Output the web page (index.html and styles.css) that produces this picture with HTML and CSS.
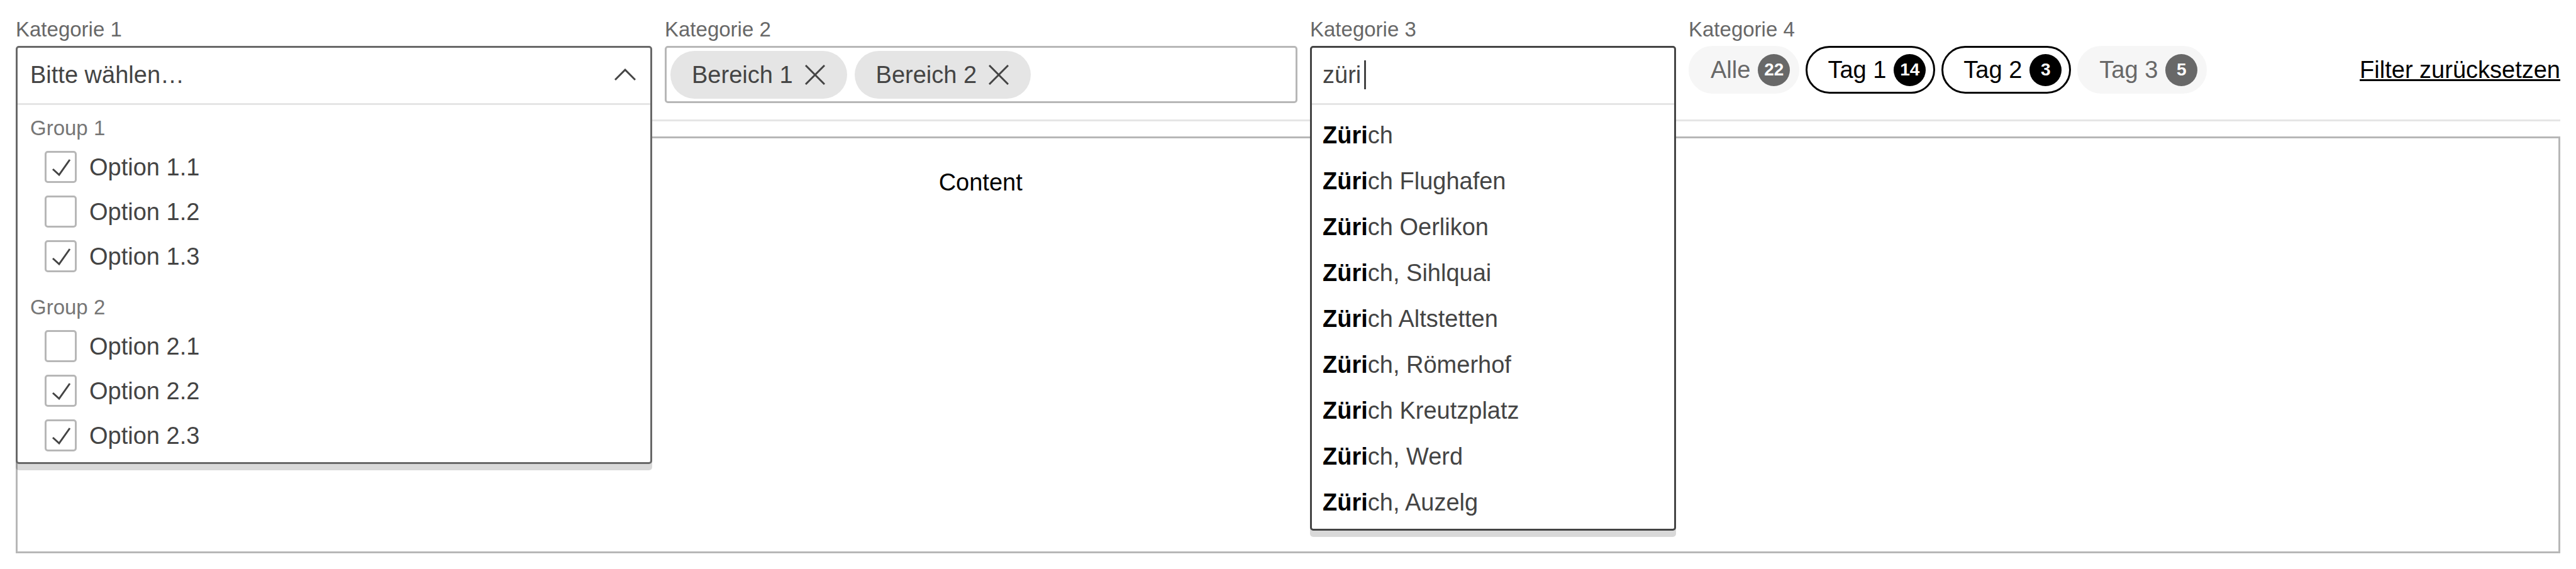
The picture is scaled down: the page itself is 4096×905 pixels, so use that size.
FILE: index.html
```html
<!DOCTYPE html>
<html lang="de">
<head>
<meta charset="utf-8">
<title>Filter</title>
<link rel="stylesheet" href="styles.css">
</head>
<body class="page">
<form class="filters">
  <div class="field">
    <label class="field-label" for="kategorie1">Kategorie 1</label>
    <div class="anchor">
      <div class="popup">
        <button class="popup-head select-trigger" id="kategorie1" type="button" aria-expanded="true">
          <span>Bitte wählen…</span>
          <svg class="chevron" viewBox="0 0 34 20" aria-hidden="true"><path d="M1 18 17 2 33 18"/></svg>
        </button>
        <div class="groups">
          <div class="group" role="group" aria-labelledby="group1">
            <div class="group-title" id="group1">Group 1</div>
            <label class="option"><span class="box"><input class="box-input" type="checkbox" checked><svg class="tick" viewBox="0 0 51 51" aria-hidden="true"><path d="M13 29 23 38 40 14"/></svg></span>Option 1.1</label>
            <label class="option"><span class="box"><input class="box-input" type="checkbox"><svg class="tick" viewBox="0 0 51 51" aria-hidden="true"><path d="M13 29 23 38 40 14"/></svg></span>Option 1.2</label>
            <label class="option"><span class="box"><input class="box-input" type="checkbox" checked><svg class="tick" viewBox="0 0 51 51" aria-hidden="true"><path d="M13 29 23 38 40 14"/></svg></span>Option 1.3</label>
          </div>
          <div class="group" role="group" aria-labelledby="group2">
            <div class="group-title" id="group2">Group 2</div>
            <label class="option"><span class="box"><input class="box-input" type="checkbox"><svg class="tick" viewBox="0 0 51 51" aria-hidden="true"><path d="M13 29 23 38 40 14"/></svg></span>Option 2.1</label>
            <label class="option"><span class="box"><input class="box-input" type="checkbox" checked><svg class="tick" viewBox="0 0 51 51" aria-hidden="true"><path d="M13 29 23 38 40 14"/></svg></span>Option 2.2</label>
            <label class="option"><span class="box"><input class="box-input" type="checkbox" checked><svg class="tick" viewBox="0 0 51 51" aria-hidden="true"><path d="M13 29 23 38 40 14"/></svg></span>Option 2.3</label>
          </div>
        </div>
      </div>
    </div>
  </div>

  <div class="field" role="group" aria-labelledby="kategorie2">
    <div class="field-label" id="kategorie2">Kategorie 2</div>
    <div class="chip-box">
      <button class="chip" type="button">Bereich 1<svg class="cross" viewBox="0 0 32 32" aria-hidden="true"><path d="M1 1 31 31M31 1 1 31"/></svg></button>
      <button class="chip" type="button">Bereich 2<svg class="cross" viewBox="0 0 32 32" aria-hidden="true"><path d="M1 1 31 31M31 1 1 31"/></svg></button>
    </div>
  </div>

  <div class="field">
    <label class="field-label" for="kategorie3">Kategorie 3</label>
    <div class="anchor">
      <div class="popup popup-focus">
        <div class="search">
          <input class="popup-head search-input" id="kategorie3" type="text" value="züri" autocomplete="off">
          <span class="caret"></span>
        </div>
        <ul class="results">
          <li class="result"><b class="match">Züri</b>ch</li>
          <li class="result"><b class="match">Züri</b>ch Flughafen</li>
          <li class="result"><b class="match">Züri</b>ch Oerlikon</li>
          <li class="result"><b class="match">Züri</b>ch, Sihlquai</li>
          <li class="result"><b class="match">Züri</b>ch Altstetten</li>
          <li class="result"><b class="match">Züri</b>ch, Römerhof</li>
          <li class="result"><b class="match">Züri</b>ch Kreutzplatz</li>
          <li class="result"><b class="match">Züri</b>ch, Werd</li>
          <li class="result"><b class="match">Züri</b>ch, Auzelg</li>
        </ul>
      </div>
    </div>
  </div>

  <div class="field" role="group" aria-labelledby="kategorie4">
    <div class="field-label" id="kategorie4">Kategorie 4</div>
    <div class="tag-row">
      <div class="tags">
        <button class="tag" type="button" aria-pressed="false">Alle<span class="count">22</span></button>
        <button class="tag tag-on" type="button" aria-pressed="true">Tag 1<span class="count">14</span></button>
        <button class="tag tag-on" type="button" aria-pressed="true">Tag 2<span class="count">3</span></button>
        <button class="tag" type="button" aria-pressed="false">Tag 3<span class="count">5</span></button>
      </div>
      <a class="reset" href="#">Filter zurücksetzen</a>
    </div>
  </div>
</form>
<main class="content">Content</main>
</body>
</html>
```
FILE: styles.css
```css
*, *::before, *::after { box-sizing: border-box; }

.page {
  margin: 0;
  min-height: 100vh;
  padding: 27px 25px 25px;
  display: flex;
  flex-direction: column;
  gap: 24px;
  background: #fff;
  color: #444;
  font: 38px/46px "Liberation Sans", Arial, sans-serif;
}

button, input { font: inherit; color: inherit; margin: 0; }
button { cursor: pointer; }

/* Filter bar */
.filters {
  display: grid;
  grid-template-columns: 1012fr 1006fr 582fr 1386fr;
  gap: 20px;
  padding-bottom: 26px;
  border-bottom: 3px solid #e5e5e5;
}
.field { min-width: 0; display: flex; flex-direction: column; gap: 6px; }
.field-label { font-size: 33px; line-height: 40px; color: #686868; }

/* Open drop-downs */
.anchor { position: relative; height: 91px; }
.popup {
  position: absolute;
  z-index: 2;
  top: 0;
  left: 0;
  right: 0;
  background: #fff;
  border: 3px solid #686868;
  border-radius: 5px;
  box-shadow: 0 10px 0 rgba(0, 0, 0, .15);
}
.popup-focus { border-color: #444; }
.popup-head {
  display: flex;
  width: 100%;
  background: transparent;
  border: 0;
  border-bottom: 3px solid #e5e5e5;
  outline: 0;
  text-align: left;
}
.select-trigger {
  align-items: center;
  justify-content: space-between;
  padding: 20px 23px 22px 20px;
}
.chevron { width: 34px; height: 20px; }
.chevron, .tick, .cross { fill: none; stroke: #444; stroke-width: 3; }

.groups { padding: 17px 20px 17px; display: flex; flex-direction: column; gap: 36px; }
.group { display: flex; flex-direction: column; gap: 20px; }
.group-title { font-size: 33px; line-height: 40px; margin-bottom: -4px; color: #767676; }
.option { display: flex; align-items: center; gap: 20px; padding-left: 23px; }
.box { display: grid; width: 51px; height: 51px; }
.box-input {
  grid-area: 1 / 1;
  appearance: none;
  width: 51px;
  height: 51px;
  border: 3px solid #b7b7b7;
  border-radius: 5px;
  background: #fff;
}
.tick { grid-area: 1 / 1; width: 51px; height: 51px; visibility: hidden; pointer-events: none; }
.box-input:checked + .tick { visibility: visible; }

/* Selected areas */
.chip-box {
  display: flex;
  gap: 12px;
  padding: 5px 6px 4px;
  border: 3px solid #b7b7b7;
  border-radius: 5px;
}
.chip {
  display: flex;
  align-items: center;
  gap: 19px;
  height: 76px;
  padding: 0 35px 0 34px;
  border: 0;
  border-radius: 38px;
  background: #e5e5e5;
}
.cross { width: 32px; height: 32px; }

/* Search */
.search { position: relative; }
.search-input { height: 91px; padding: 20px 17px 22px; }
.caret { position: absolute; top: 20px; left: 83px; width: 3px; height: 46px; background: #444; }
.results { list-style: none; margin: 0; padding: 11px 0 6px; }
.result { padding: 14px 17px 13px; }
.match { color: #000; }

/* Tags */
.tag-row { display: flex; justify-content: space-between; align-items: center; }
.tags { display: flex; gap: 10px; }
.tag {
  display: flex;
  align-items: center;
  justify-content: space-between;
  gap: 12px;
  height: 76px;
  padding: 0 12px 0 32px;
  border: 3px solid #f6f6f6;
  border-radius: 38px;
  background: #f6f6f6;
  color: #686868;
}
.tag-on { border-color: #000; background: #fff; color: #000; }
.count {
  display: grid;
  place-items: center;
  width: 51px;
  height: 51px;
  border-radius: 50%;
  background: #686868;
  color: #fff;
  font-size: 28px;
  font-weight: 700;
}
.tag-on .count { background: #000; }
.reset {
  color: #000;
  text-decoration-thickness: 3px;
  text-underline-offset: 2px;
  text-decoration-skip-ink: none;
}

.content {
  flex: 1;
  padding: 47px 20px 20px 36.2%;
  border: 3px solid #b7b7b7;
  color: #000;
}
```
